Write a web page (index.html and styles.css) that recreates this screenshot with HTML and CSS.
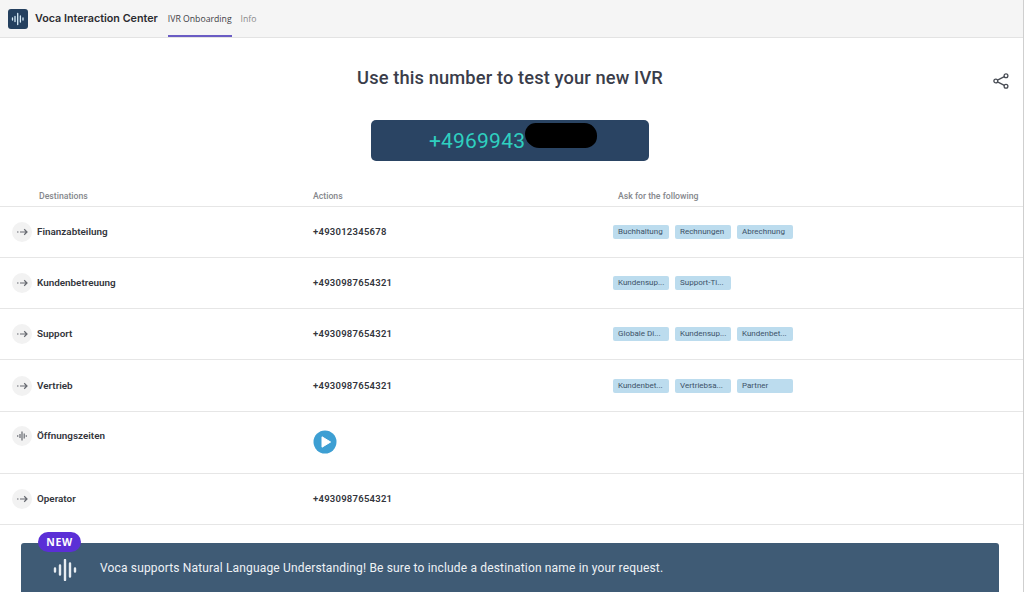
FILE: index.html
```html
<!DOCTYPE html>
<html lang="en">
<head>
<meta charset="utf-8">
<title>Voca Interaction Center</title>
<link rel="stylesheet" href="styles.css">
</head>
<body>
<header class="topbar">
  <div class="logo">
    <svg viewBox="0 0 20 20" width="20" height="20"><g stroke="#d8ecf8" stroke-width="1.3" stroke-linecap="round"><path d="M4.500 9v2M7 7.500v5M9.700 4.500v11M12.400 7v6M15 9v2"/></g></svg>
  </div>
  <div class="app-name">Voca Interaction Center</div>
  <nav class="tabs">
    <a class="tab tab-active">IVR Onboarding</a>
    <a class="tab">Info</a>
  </nav>
</header>
<main class="page">
  <section class="hero">
    <h1 class="title">Use this number to test your new IVR</h1>
    <svg class="share" viewBox="0 0 16 16" width="16" height="16" fill="none" stroke="#484c54" stroke-width="1.3"><circle cx="13" cy="2.8" r="1.9"/><circle cx="13" cy="13.200" r="1.9"/><circle cx="2.8" cy="8" r="1.9"/><path d="M4.500 7.100 11.300 3.700M4.500 8.900l6.800 3.400"/></svg>
    <div class="number-box">
      <span class="number">+4969943</span>
      <span class="redaction"></span>
    </div>
  </section>

  <div class="row-head">
    <div>Destinations</div>
    <div>Actions</div>
    <div>Ask for the following</div>
  </div>

  <div class="row">
    <div class="icon-circle"><svg class="arrow" viewBox="0 0 11 8" width="11" height="8"><path d="M0 4h1.500M3 4h7M7.200 1.300 10 4 7.200 6.700"/></svg></div>
    <div class="name">Finanzabteilung</div>
    <div class="action">+493012345678</div>
    <div class="tags"><span class="tag">Buchhaltung</span><span class="tag">Rechnungen</span><span class="tag">Abrechnung</span></div>
  </div>
  <div class="row">
    <div class="icon-circle"><svg class="arrow" viewBox="0 0 11 8" width="11" height="8"><path d="M0 4h1.500M3 4h7M7.200 1.300 10 4 7.200 6.700"/></svg></div>
    <div class="name">Kundenbetreuung</div>
    <div class="action">+4930987654321</div>
    <div class="tags"><span class="tag">Kundensup...</span><span class="tag">Support-Ti...</span></div>
  </div>
  <div class="row">
    <div class="icon-circle"><svg class="arrow" viewBox="0 0 11 8" width="11" height="8"><path d="M0 4h1.500M3 4h7M7.200 1.300 10 4 7.200 6.700"/></svg></div>
    <div class="name">Support</div>
    <div class="action">+4930987654321</div>
    <div class="tags"><span class="tag">Globale Di...</span><span class="tag">Kundensup...</span><span class="tag">Kundenbet...</span></div>
  </div>
  <div class="row row-wide">
    <div class="icon-circle"><svg class="arrow" viewBox="0 0 11 8" width="11" height="8"><path d="M0 4h1.500M3 4h7M7.200 1.300 10 4 7.200 6.700"/></svg></div>
    <div class="name">Vertrieb</div>
    <div class="action">+4930987654321</div>
    <div class="tags"><span class="tag">Kundenbet...</span><span class="tag">Vertriebsa...</span><span class="tag">Partner</span></div>
  </div>
  <div class="row row-tall">
    <div class="icon-circle"><svg class="wave" viewBox="0 0 10 10" width="10" height="10"><path d="M.7 4.200v1.600M3 3v4M5 .5v9M7.200 2.500v5M9.300 4.200v1.600"/></svg></div>
    <div class="name">Öffnungszeiten</div>
    <div class="action">
      <svg class="play" viewBox="0 0 24 24" width="24" height="24"><circle cx="12" cy="12" r="11.500" fill="#3d9fd3"/><path d="M9 6.800 17.600 12 9 17.200Z" fill="#fff" stroke="#fff" stroke-width="1" stroke-linejoin="round"/></svg>
    </div>
    <div class="tags"></div>
  </div>
  <div class="row">
    <div class="icon-circle"><svg class="arrow" viewBox="0 0 11 8" width="11" height="8"><path d="M0 4h1.500M3 4h7M7.200 1.300 10 4 7.200 6.700"/></svg></div>
    <div class="name">Operator</div>
    <div class="action">+4930987654321</div>
    <div class="tags"></div>
  </div>

  <aside class="banner">
    <span class="badge">NEW</span>
    <svg class="banner-icon" viewBox="0 0 24 22" width="24" height="22"><path d="M2 9.500v3M7 6.500v9M12 1v20M17 4.500v13M22 9.500v3"/></svg>
    <p class="banner-text">Voca supports Natural Language Understanding! Be sure to include a destination name in your request.</p>
  </aside>
</main>
</body>
</html>
```
FILE: styles.css
```css
* { box-sizing: border-box; }
html, body { margin: 0; height: 100%; }
body {
  width: 1024px;
  height: 592px;
  overflow: hidden;
  background: #fff;
  font-family: Roboto, "Liberation Sans", sans-serif;
  color: #2f323a;
  border-right: 1px solid #cfcfcf;
}
.topbar {
  height: 38px;
  display: flex;
  align-items: center;
  background: #f5f5f5;
  border-bottom: 1px solid #e3e3e3;
  padding-left: 8px;
}
.logo {
  width: 20px;
  height: 20px;
  border-radius: 3px;
  background: #24405f;
  display: flex;
  flex: none;
}
.app-name {
  margin-left: 7px;
  font-family: Inter, "Liberation Sans", sans-serif;
  font-size: 10.75px;
  font-weight: 600;
  color: #2b2b2f;
  white-space: nowrap;
}
.tabs {
  display: flex;
  height: 37px;
  margin-left: 10px;
  gap: 9px;
}
.tab {
  font-family: "Open Sans", "Liberation Sans", sans-serif;
  font-size: 8.7px;
  color: #8a8a8a;
  display: flex;
  align-items: center;
  padding-top: 3px;
  border-bottom: 2px solid transparent;
}
.tab-active {
  color: #3e3e46;
  border-bottom-color: #6a5cc4;
}
.page { display: block; }
.hero {
  position: relative;
  height: 152px;
  padding-right: 3px;
  display: flex;
  flex-direction: column;
  align-items: center;
}
.title {
  margin: 30px 0 0;
  font-size: 18.3px;
  line-height: 20px;
  font-weight: 500;
  letter-spacing: 0.12px;
  color: #3a3d4a;
}
.share {
  position: absolute;
  top: 35px;
  right: 14px;
}
.number-box {
  position: relative;
  margin-top: 32px;
  width: 278px;
  height: 41px;
  border-radius: 5px;
  background: #2a4463;
  display: flex;
  align-items: center;
  padding-left: 58px;
}
.number {
  font-size: 21px;
  letter-spacing: 0.2px;
  color: #2fd0c0;
}
.redaction {
  position: absolute;
  left: 154px;
  top: 3px;
  width: 72px;
  height: 25px;
  background: #000;
  border-radius: 12px 14px 13px 16px;
}
.row-head, .row {
  display: grid;
  padding-left: 12px;
}
.row-head {
  height: 17px;
  grid-template-columns: 274px 305px 1fr;
  padding-left: 39px;
  font-size: 8.7px;
  font-weight: 500;
  line-height: 12px;
  color: #85878c;
  border-bottom: 1px solid #e6e6e6;
}
.row {
  grid-template-columns: 20px 280px 301px 1fr;
  height: 51px;
  border-bottom: 1px solid #e6e6e6;
  align-items: center;
}
.row-wide { height: 52px; }
.row-tall {
  height: 62px;
  align-items: start;
  padding-top: 14px;
}
.icon-circle {
  width: 20px;
  height: 20px;
  border-radius: 50%;
  background: #f2f2f2;
  display: flex;
  align-items: center;
  justify-content: center;
}
.arrow, .wave { fill: none; stroke: #666970; stroke-width: 1.2; }
.name {
  padding-left: 5px;
  font-size: 9.9px;
  font-weight: 600;
  color: #33353c;
  line-height: 12px;
}
.row-tall .name { line-height: 20px; }
.action {
  padding-left: 1px;
  font-size: 9.5px;
  font-weight: 600;
  letter-spacing: 0.25px;
  line-height: 12px;
  color: #33353c;
}
.play { display: block; margin-top: 4px; }
.tags { display: flex; gap: 6px; }
.tag {
  width: 56px;
  height: 14px;
  padding-left: 5px;
  font-size: 8px;
  line-height: 13px;
  color: #3c5268;
  background: #bcdcee;
  border-radius: 2px;
  white-space: nowrap;
  overflow: hidden;
}
.banner {
  position: relative;
  margin: 18px 0 0 21px;
  width: 978px;
  height: 60px;
  background: #3f5b75;
  border-radius: 3px;
  display: flex;
  align-items: flex-start;
  color: #eef2f5;
}
.badge {
  position: absolute;
  left: 17px;
  top: -11px;
  width: 43px;
  height: 20px;
  border-radius: 10px;
  background: #5b2fd6;
  color: #fff;
  font-family: "Open Sans", "Liberation Sans", sans-serif;
  font-size: 10.5px;
  font-weight: 700;
  letter-spacing: 0.7px;
  line-height: 20px;
  text-align: center;
}
.banner-icon {
  margin: 16px 0 0 32px;
  fill: none;
  stroke: #e8edf2;
  stroke-width: 2.4;
  stroke-linecap: round;
  flex: none;
}
.banner-text {
  margin: 17px 0 0 23px;
  font-size: 12px;
  line-height: 16px;
  letter-spacing: 0.16px;
}
```
